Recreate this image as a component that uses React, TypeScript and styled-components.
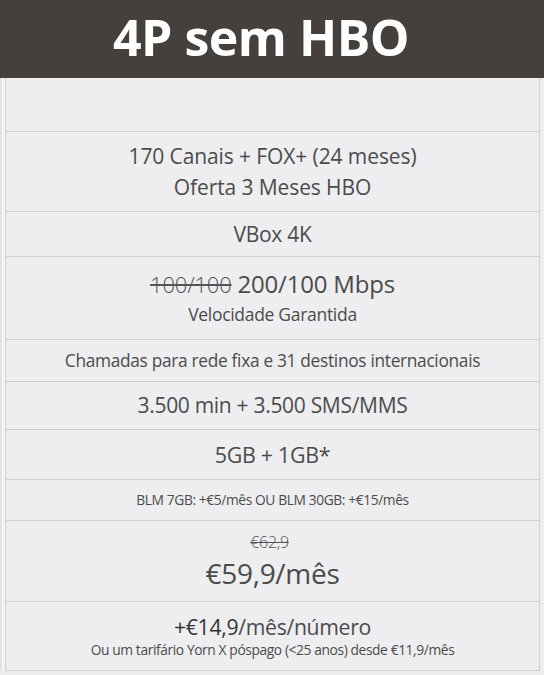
import { FC } from 'react'
import styled, { createGlobalStyle } from 'styled-components'

const GlobalStyle = createGlobalStyle`
  html, body {
    margin: 0;
    padding: 0;
    background: #eeeef0;
  }
  body {
    font-family: 'Open Sans', 'DejaVu Sans', sans-serif;
    color: #4b4b4b;
  }
`

const Page = styled.div`
  width: 544px;
  height: 675px;
  overflow: hidden;
  background: #eeeef0;
`

const Header = styled.h1`
  margin: 0;
  height: 78px;
  background: #46403c;
  color: #fff;
  font-family: 'Open Sans', sans-serif;
  font-weight: 700;
  font-size: 50px;
  letter-spacing: -0.5px;
  display: flex;
  align-items: center;
  justify-content: center;
  padding: 0 22px 4px 0;
  box-sizing: border-box;
`

const Table = styled.div`
  margin: 0 4px 0 5px;
  border-left: 1px solid #cfcfd1;
  border-right: 1px solid #cfcfd1;
  box-shadow: -3px 0 0 #f4f4f5, -5px 0 0 #e2e2e4;
  display: flex;
  flex-direction: column;
`

const Row = styled.div<{ $h: number }>`
  height: ${(p) => p.$h}px;
  border-bottom: 1px solid #cfcfd1;
  box-sizing: border-box;
  display: flex;
  flex-direction: column;
  align-items: center;
  justify-content: center;
  text-align: center;
`

const Line = styled.div<{ $size: number; $lh?: number; $tight?: number }>`
  font-size: ${(p) => p.$size}px;
  line-height: ${(p) => p.$lh ?? Math.round(p.$size * 1.3)}px;
  letter-spacing: ${(p) => p.$tight ?? -0.3}px;
  white-space: nowrap;
`

const Strike = styled.span<{ $size: number }>`
  font-size: ${(p) => p.$size}px;
  font-weight: 300;
  text-decoration: line-through;
  color: #555;
  margin-right: 6px;
`

const Strong = styled.span`
  color: #333;
`

const App: FC = () => {
  return (
    <Page>
      <GlobalStyle />
      <Header>4P sem HBO</Header>
      <Table>
        <Row $h={54} />
        <Row $h={80}>
          <Line $size={21} $lh={31} $tight={-0.1}>170 Canais + FOX+ (24 meses)</Line>
          <Line $size={21} $lh={31} $tight={-0.1}>Oferta 3 Meses HBO</Line>
        </Row>
        <Row $h={45}>
          <Line $size={21}>VBox 4K</Line>
        </Row>
        <Row $h={83}>
          <Line $size={24} $lh={32} $tight={-0.2}>
            <Strike $size={22}>100/100</Strike>200/100 Mbps
          </Line>
          <Line $size={17.5} $lh={28}>Velocidade Garantida</Line>
        </Row>
        <Row $h={42}>
          <Line $size={17.3}>Chamadas para rede fixa e 31 destinos internacionais</Line>
        </Row>
        <Row $h={48}>
          <Line $size={21}>3.500 min + 3.500 SMS/MMS</Line>
        </Row>
        <Row $h={50}>
          <Line $size={21.4}>5GB + 1GB*</Line>
        </Row>
        <Row $h={41}>
          <Line $size={13.8} $tight={-0.4}>BLM 7GB: +€5/mês OU BLM 30GB: +€15/mês</Line>
        </Row>
        <Row $h={81}>
          <Line $size={16} $lh={24}>
            <Strike $size={16}>€62,9</Strike>
          </Line>
          <Line $size={28} $lh={38}>€59,9/mês</Line>
        </Row>
        <Row $h={69}>
          <Line $size={21.2} $lh={27}>
            <Strong>+€14,9</Strong>/mês/número
          </Line>
          <Line $size={13.8} $lh={19} $tight={-0.4}>Ou um tarifário Yorn X póspago (&lt;25 anos) desde €11,9/mês</Line>
        </Row>
      </Table>
    </Page>
  )
}

export default App
